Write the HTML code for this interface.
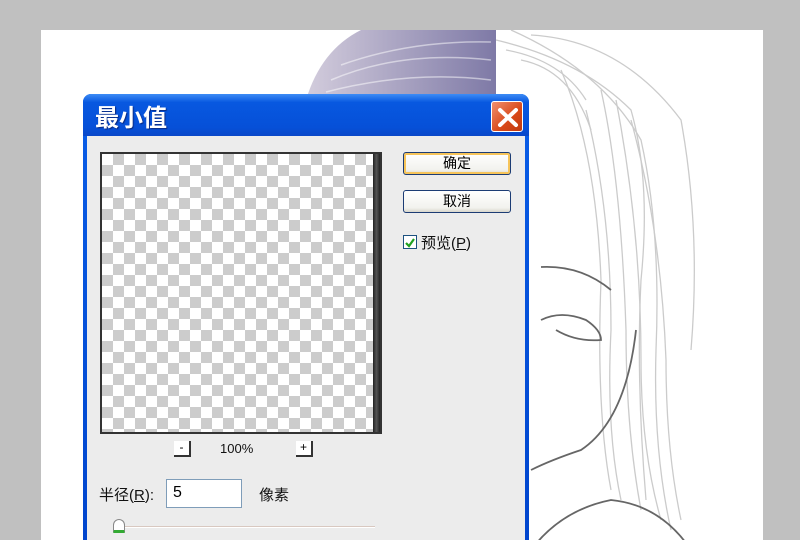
<!DOCTYPE html>
<html><head><meta charset="utf-8"><style>
*{margin:0;padding:0;box-sizing:border-box}
html,body{width:800px;height:540px;overflow:hidden}
body{background:#c0c0c0;position:relative;font-family:"Liberation Sans","Noto Sans CJK SC",sans-serif}
.canvas{position:absolute;left:41px;top:30px;width:722px;height:520px;background:#fff;overflow:hidden}
.dlg{position:absolute;left:83px;top:94px;width:446px;height:460px;background:linear-gradient(#0a5ee8,#0044cc);border-radius:8px 8px 0 0;padding:0 4px}
.title{height:42px;color:#fff;font-size:24px;font-weight:bold;line-height:44px;font-family:"Noto Sans CJK SC",sans-serif;text-shadow:1px 1px 1px #0a2a80;background:linear-gradient(#3d8cf5,#0858e0 20%,#0650d8 80%,#0a48c8);border-radius:8px 8px 0 0;margin:0 -4px;padding-left:12px}
.body{background:#ececec;height:420px;position:relative}
.x{position:absolute;right:6px;top:7px;width:32px;height:31px;border:1px solid #fff;border-radius:3px;background:linear-gradient(135deg,#f09070,#d84818 60%,#c03a10)}
.x svg{position:absolute;left:4px;top:4px}
.prev{position:absolute;left:13px;top:16px;width:282px;height:282px;border:2px solid #333;background-color:#fff;background-image:linear-gradient(45deg,#ccc 25%,transparent 25%,transparent 75%,#ccc 75%),linear-gradient(45deg,#ccc 25%,transparent 25%,transparent 75%,#ccc 75%);background-size:22px 22px;background-position:0 0,11px 11px}
.prev:after{content:"";position:absolute;right:0;top:0;width:7px;height:100%;background:linear-gradient(90deg,#222,#555,#222)}
.btn{position:absolute;left:316px;width:108px;height:23px;border:1px solid #1c3c74;border-radius:3px;background:linear-gradient(#fff,#f2f2ee 80%,#d8d6cc);font-size:14px;text-align:center;line-height:21px;font-family:"Noto Sans CJK SC",sans-serif}
.ok{box-shadow:inset 0 0 0 2px #f6c45a}
.t{position:absolute;font-size:15px;font-family:"Liberation Sans","Noto Sans CJK SC",sans-serif;color:#111}
.zb{position:absolute;top:305px;width:17px;height:16px;border-right:2px solid #333;border-bottom:2px solid #333;background:#fff;font-size:12px;text-align:center;line-height:12px}
</style></head><body>
<div class="canvas">
<svg width="722" height="520" style="position:absolute;left:0;top:0">
<defs><linearGradient id="h" x1="0" x2="1"><stop offset="0" stop-color="#c8c0d4"/><stop offset="1" stop-color="#5e5890"/></linearGradient></defs>
<path d="M265 70 Q280 20 320 0 L455 0 L455 70 Z" fill="url(#h)" opacity=".8"/>
<g fill="none" stroke="#fff" stroke-width="1.5" opacity=".5">
<path d="M290 50 Q360 20 450 30"/><path d="M300 35 Q370 10 450 12"/><path d="M285 62 Q370 40 450 50"/>
</g>
<g fill="none" stroke="#aaa" stroke-width="1.3" opacity=".6">
<path d="M455 10 Q540 30 590 80 Q610 150 600 250 Q595 350 605 470"/>
<path d="M470 0 Q560 40 600 110 Q620 200 615 320 Q612 420 630 500"/>
<path d="M560 60 Q580 150 585 300 Q585 400 600 480"/>
<path d="M575 70 Q600 200 600 330 Q600 420 620 490"/>
<path d="M545 80 Q570 180 570 300 Q565 400 580 470"/>
<path d="M490 5 Q580 10 640 90 Q660 200 650 320"/>
<path d="M520 40 Q555 120 560 250 Q555 380 570 460"/>
<path d="M590 90 Q620 200 625 330 Q625 420 640 490"/>
<path d="M465 20 Q520 30 545 70"/>
<path d="M480 30 Q530 40 550 100"/>
</g>
<g fill="none" stroke="#666" stroke-width="1.8">
<path d="M500 237 Q540 235 570 260"/>
<path d="M500 290 Q520 280 545 290 Q560 300 560 310 Q535 312 515 300"/>
<path d="M595 300 Q585 390 540 420 Q510 430 490 440"/>
<path d="M490 520 Q520 480 570 470 Q620 475 650 520"/>
</g>
</svg>
</div>
<div class="dlg">
<div class="title">最小值</div>
<div class="x"><svg width="24" height="23"><path d="M4 4L20 19M20 4L4 19" stroke="#fff" stroke-width="4" stroke-linecap="round"/></svg></div>
<div class="body">
<div class="prev"></div>
<div class="btn ok" style="top:16px">确定</div>
<div class="btn" style="top:54px">取消</div>
<div style="position:absolute;left:316px;top:99px;width:14px;height:14px;border:1px solid #1c5180;background:#fff"><svg width="12" height="12"><path d="M2 6L5 9L10 2" stroke="#21a121" stroke-width="2.2" fill="none"/></svg></div>
<div class="t" style="left:334px;top:96px">预览(<u>P</u>)</div>
<div class="zb" style="left:87px">-</div>
<div class="t" style="left:133px;top:305px;font-size:13px">100%</div>
<div class="zb" style="left:209px">+</div>
<div class="t" style="left:12px;top:348px">半径(<u>R</u>):</div>
<div style="position:absolute;left:79px;top:343px;width:76px;height:29px;border:1px solid #7f9db9;background:#fff;font-size:16px;padding:4px 6px">5</div>
<div class="t" style="left:172px;top:348px">像素</div>
<div style="position:absolute;left:28px;top:390px;width:260px;height:2px;background:#d8c8c0;border-bottom:1px solid #fff"></div>
<div style="position:absolute;left:26px;top:383px;width:12px;height:14px;background:#fff;border:1px solid #888;border-bottom:3px solid #3a3;border-radius:6px 6px 1px 1px"></div>
</div>
</div>
</body></html>
